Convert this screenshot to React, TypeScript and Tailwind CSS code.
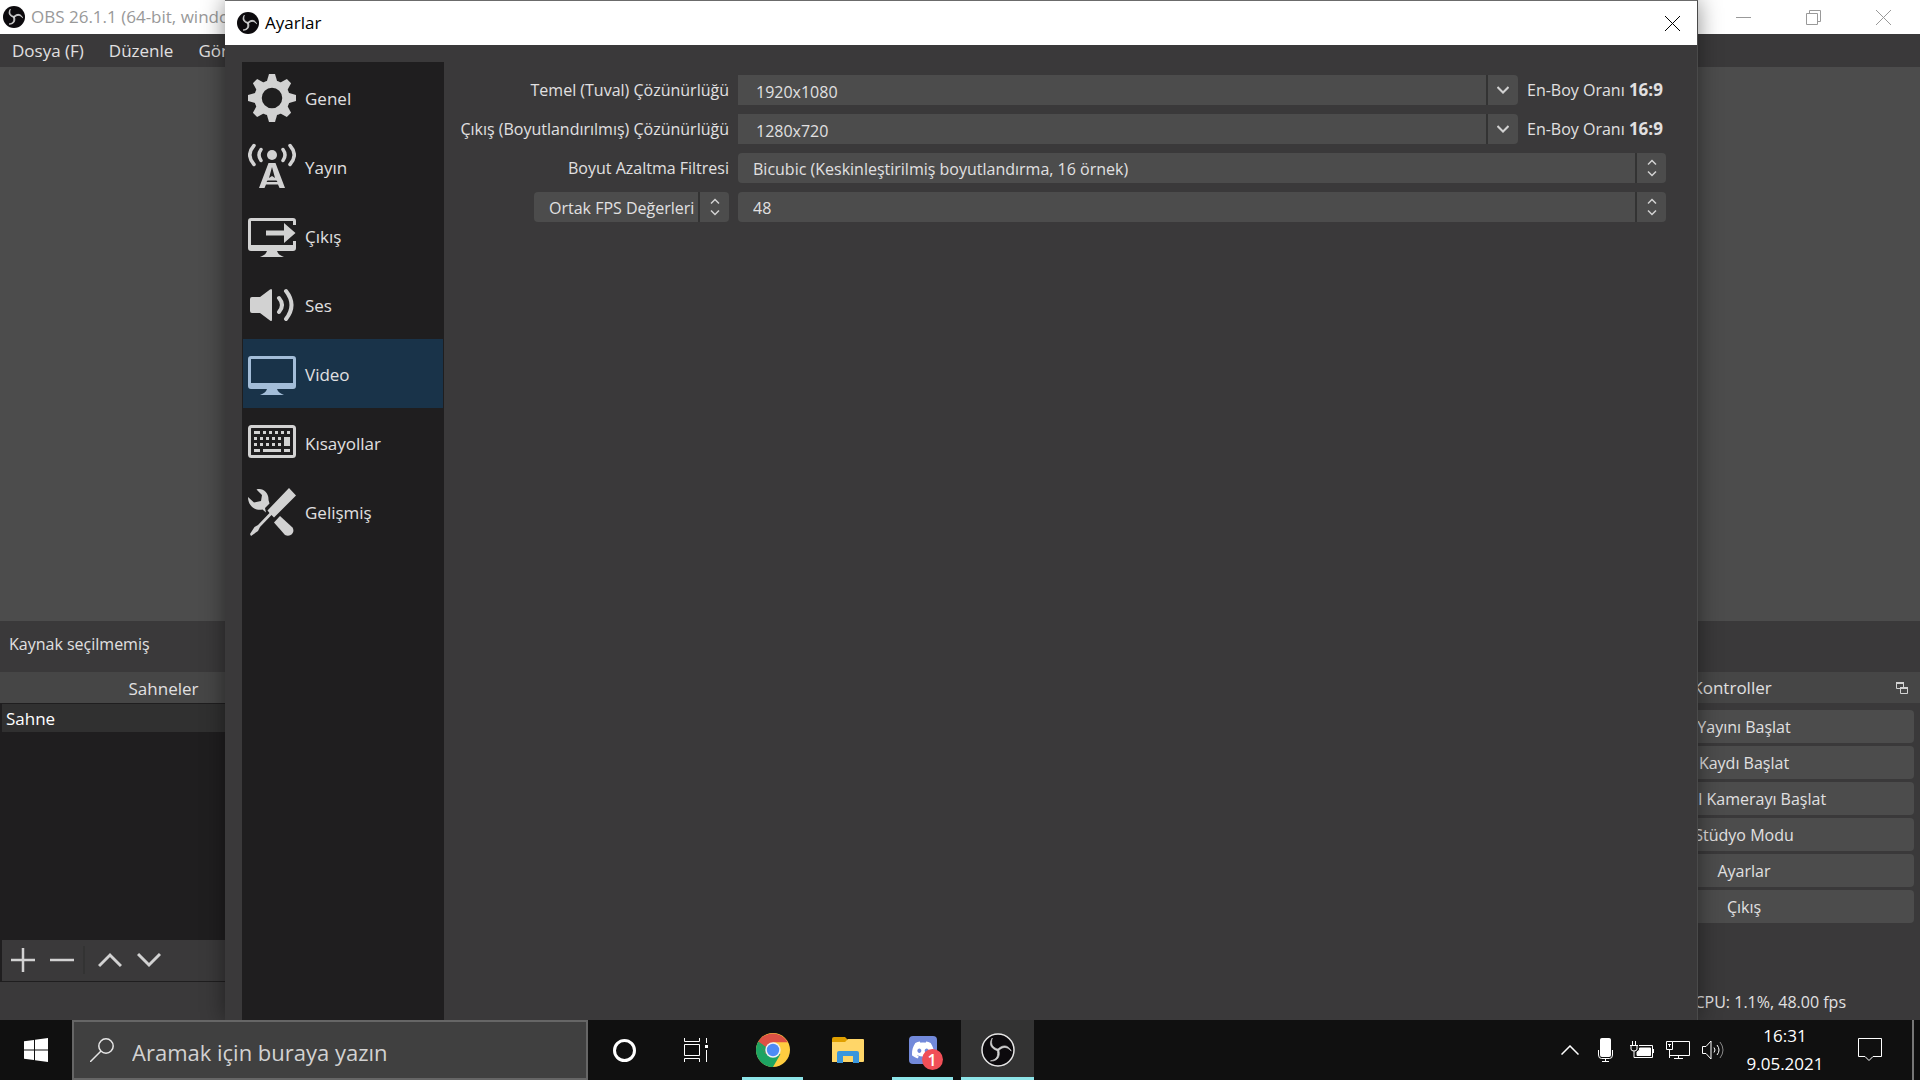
import type { ReactNode } from "react";
import { SiDiscord } from "react-icons/si";

interface SettingsPage {
  id: string;
  label: string;
  icon: ReactNode;
}

const monitorFrame =
  "M3 6h42a3 3 0 0 1 3 3v27a3 3 0 0 1-3 3H29c1 3 3 4.500 7 6H12c4-1.500 6-3 7-6H3a3 3 0 0 1-3-3V9a3 3 0 0 1 3-3ZM3 9v24h42V9Z";

const keyRows = [
  { y: 12, keys: [[6, 6], [15, 3], [21, 3], [27, 3], [33, 3], [39, 3]] },
  { y: 18, keys: [[6, 3], [12, 3], [18, 3], [24, 3], [30, 3]] },
  { y: 24, keys: [[6, 3], [12, 3], [18, 3], [24, 3], [30, 3]] },
  { y: 30, keys: [[6, 6], [15, 18], [36, 6]] },
];

const pages: SettingsPage[] = [
  {
    id: "general",
    label: "Genel",
    icon: (
      <>
        <circle cx="24" cy="24" r="14" fill="none" stroke="currentColor" strokeWidth="7.500" />
        {[0, 45, 90, 135, 180, 225, 270, 315].map((angle) => (
          <path key={angle} d="M21 0h6l2.500 8.500h-11Z" transform={`rotate(${angle} 24 24)`} />
        ))}
      </>
    ),
  },
  {
    id: "stream",
    label: "Yayın",
    icon: (
      <>
        <circle cx="24" cy="12" r="5" />
        <g fill="none" stroke="currentColor" strokeWidth="3.500" strokeLinecap="round">
          <path d="M13 6.500q-4 5.500 0 11M35 6.500q4 5.500 0 11M6 2.500q-8.500 9.500 0 19M42 2.500q8.500 9.500 0 19" />
        </g>
        <path
          fillRule="evenodd"
          d="M20.500 20h7L37 45h-5.500L30 41.500H18L16.500 45H11ZM24 24l-3 11 3-2 3 2ZM19.500 37.500l-1 1.500h11l-1-1.500Z"
        />
      </>
    ),
  },
  {
    id: "output",
    label: "Çıkış",
    icon: (
      <path d="M3 6h42a3 3 0 0 1 3 3v4h-3V9H3v24h42v-4h3v7a3 3 0 0 1-3 3H29c1 3 3 4.500 7 6H12c4-1.500 6-3 7-6H3a3 3 0 0 1-3-3V9a3 3 0 0 1 3-3ZM18 18.500h18V11l11.500 10L36 31v-7.500H18Z" />
    ),
  },
  {
    id: "audio",
    label: "Ses",
    icon: (
      <>
        <path d="M4 16h8L22 8.500q2-1.500 2 1v29q0 2.500-2 1L12 32H4q-2 0-2-2V18q0-2 2-2Z" />
        <g fill="none" stroke="currentColor" strokeWidth="4" strokeLinecap="round">
          <path d="M31 17q6 7 0 14M38 10q11 14 0 28" />
        </g>
      </>
    ),
  },
  {
    id: "video",
    label: "Video",
    icon: <path fillRule="evenodd" d={monitorFrame} />,
  },
  {
    id: "hotkeys",
    label: "Kısayollar",
    icon: (
      <>
        <rect x="1.500" y="7.500" width="45" height="30" rx="2" fill="none" stroke="currentColor" strokeWidth="3" />
        {keyRows.map((row) =>
          row.keys.map(([x, width]) => (
            <rect key={`${row.y}-${x}`} x={x} y={row.y} width={width} height="3" />
          ))
        )}
        <rect x="36" y="18" width="6" height="9" />
      </>
    ),
  },
  {
    id: "advanced",
    label: "Gelişmiş",
    icon: (
      <>
        <path d="M41 0l7 7.500L26 29.500l-2.500-2.500L12 39l-2 4-7 5-1-2 4.500-7 3.500-2L21.500 25 19.500 22.500Z" />
        <path d="M8.500 1.500C15 -.5 21 5 20.500 12l1 3.500-4.500 4.500 1 4.500-3.500-3C7 23 0 18 0 9l6 5.500 7-1.500 1-6Z" />
        <path d="M32 28l12.500 11.500c3 5-2 10-7.500 7.500L26 34.500Z" />
      </>
    ),
  },
];

const controls = [
  "Yayını Başlat",
  "Kaydı Başlat",
  "Sanal Kamerayı Başlat",
  "Stüdyo Modu",
  "Ayarlar",
  "Çıkış",
];

function ObsLogo({ className, ring }: { className: string; ring?: boolean }) {
  return (
    <svg viewBox="-17 -17 34 34" className={`shrink-0 ${className}`}>
      <circle r={ring ? 16 : 17} fill="#0c0a0d" stroke={ring ? "#e6e6e6" : "none"} strokeWidth="1.500" />
      <g fill="#d2d2d2" stroke="#d2d2d2" strokeWidth={ring ? 0.6 : 1.2} strokeLinejoin="round">
        {[0, 120, 240].map((angle) => (
          <path
            key={angle}
            d="M-5.700-12C-10.500-5-5.500-.5 0 .8L.5-.8C-4.500-2-8-5-5.700-12Z"
            transform={`rotate(${angle})`}
          />
        ))}
      </g>
    </svg>
  );
}

function CloseIcon() {
  return (
    <svg viewBox="0 0 15 15" className="size-[15px]" fill="none" stroke="currentColor">
      <path d="M0 0l15 15M15 0L0 15" />
    </svg>
  );
}

function Spinner() {
  return (
    <span className="pointer-events-none absolute inset-y-0 right-0 flex w-[31px] items-center justify-center border-l-2 border-[#333333]">
      <svg viewBox="0 0 10 18" className="h-[18px] w-[10px]" fill="none" stroke="#d2d2d2" strokeWidth="1.500">
        <path d="M1 5.500l4-4 4 4M1 12.500l4 4 4-4" />
      </svg>
    </span>
  );
}

function ComboBox({ id, value }: { id: string; value: string }) {
  return (
    <div className="flex h-[30px] min-w-0 flex-1">
      <input
        id={id}
        defaultValue={value}
        className="min-w-0 flex-1 bg-[#4c4c4c] pt-1 pl-[18px] outline-none"
      />
      <button
        type="button"
        aria-label="Listeyi aç"
        className="flex w-8 items-center justify-center rounded-r border-l-2 border-[#333333] bg-[#4c4c4c]"
      >
        <svg viewBox="0 0 12 8" className="h-2 w-3" fill="none" stroke="#d2d2d2" strokeWidth="2">
          <path d="M0.500 1L6 6.500 11.500 1" />
        </svg>
      </button>
    </div>
  );
}

function SelectBox({ id, value, label }: { id: string; value: string; label?: string }) {
  return (
    <div className="relative h-[30px] w-full">
      <select
        id={id}
        aria-label={label}
        className="size-full appearance-none rounded bg-[#4c4c4c] pt-0.5 pr-8 pl-[15px] outline-none"
      >
        <option>{value}</option>
      </select>
      <Spinner />
    </div>
  );
}

function AspectRatio() {
  return (
    <span className="w-[139px] whitespace-nowrap">
      En-Boy Oranı <b className="text-[17px]">16:9</b>
    </span>
  );
}

function VideoForm() {
  return (
    <form className="grid flex-1 auto-rows-[30px] grid-cols-[285px_1fr] content-start items-center gap-[9px] pt-[13px] pr-[15px] text-base">
      <label htmlFor="base" className="text-right whitespace-nowrap">
        Temel (Tuval) Çözünürlüğü
      </label>
      <div className="flex items-center gap-[9px]">
        <ComboBox id="base" value="1920x1080" />
        <AspectRatio />
      </div>
      <label htmlFor="output" className="text-right whitespace-nowrap">
        Çıkış (Boyutlandırılmış) Çözünürlüğü
      </label>
      <div className="flex items-center gap-[9px]">
        <ComboBox id="output" value="1280x720" />
        <AspectRatio />
      </div>
      <label htmlFor="filter" className="text-right whitespace-nowrap">
        Boyut Azaltma Filtresi
      </label>
      <SelectBox id="filter" value="Bicubic (Keskinleştirilmiş boyutlandırma, 16 örnek)" />
      <div className="w-[195px] justify-self-end">
        <SelectBox id="fps-type" label="FPS türü" value="Ortak FPS Değerleri" />
      </div>
      <SelectBox id="fps" label="FPS" value="48" />
    </form>
  );
}

function SettingsDialog() {
  return (
    <section
      role="dialog"
      aria-label="Ayarlar"
      className="absolute inset-y-0 right-[222px] left-[225px] flex flex-col border-t border-r border-[#6b6b6b] border-r-[#4a4a4a] bg-[#3a393a] shadow-[0_0_22px_rgba(0,0,0,0.45)]"
    >
      <header className="flex h-11 shrink-0 items-center bg-white pr-[17px] pl-3 text-black">
        <ObsLogo className="size-[22px]" />
        <h2 className="ml-[6px] flex-1 text-[17px]">Ayarlar</h2>
        <button type="button" aria-label="Kapat">
          <CloseIcon />
        </button>
      </header>
      <div className="flex min-h-0 flex-1 pt-[17px] pr-4 pl-[17px]">
        <nav className="w-[202px] shrink-0 bg-[#1f1e1f] p-px">
          {pages.map((page) => (
            <button
              key={page.id}
              type="button"
              className={
                page.id === "video"
                  ? "flex h-[69px] w-full items-center gap-[9px] bg-[#193349] pl-[5px] text-[17px]"
                  : "flex h-[69px] w-full items-center gap-[9px] pl-[5px] text-[17px]"
              }
            >
              <svg
                viewBox="0 0 48 48"
                fill="currentColor"
                className={page.id === "video" ? "size-12 text-[#a3bdd8]" : "size-12 text-[#d2d2d2]"}
              >
                {page.icon}
              </svg>
              <span className="pt-0.5">{page.label}</span>
            </button>
          ))}
        </nav>
        <VideoForm />
      </div>
    </section>
  );
}

function ScenesDock() {
  return (
    <section className="flex w-[327px] flex-col">
      <h3 className="flex h-[31px] items-center justify-center bg-[#464646] pt-0.5 text-[17px]">Sahneler</h3>
      <div className="flex h-[279px] flex-col border border-l-2 border-[#1f1e1f] bg-[#1f1e1f]">
        <ul className="flex-1">
          <li className="flex h-7 items-center bg-[#303030] pt-0.5 pl-1 text-[17px] text-white">Sahne</li>
        </ul>
        <div className="flex h-[41px] items-center bg-[#3a393a] pb-0.5 pl-[9px] text-[#d2d2d2]">
          <button type="button" aria-label="Ekle">
            <svg viewBox="0 0 24 24" className="size-6" fill="none" stroke="currentColor" strokeWidth="2.500">
              <path d="M12 0v24M0 12h24" />
            </svg>
          </button>
          <button type="button" aria-label="Kaldır" className="ml-[15px]">
            <svg viewBox="0 0 24 24" className="size-6" fill="none" stroke="currentColor" strokeWidth="2.500">
              <path d="M0 12h24" />
            </svg>
          </button>
          <span className="ml-[9px] h-7 w-0.5 bg-[#333333]" />
          <button type="button" aria-label="Yukarı taşı" className="ml-[13px]">
            <svg viewBox="0 0 24 24" className="size-6" fill="none" stroke="currentColor" strokeWidth="3">
              <path d="M1 18L12 7l11 11" />
            </svg>
          </button>
          <button type="button" aria-label="Aşağı taşı" className="ml-[15px]">
            <svg viewBox="0 0 24 24" className="size-6" fill="none" stroke="currentColor" strokeWidth="3">
              <path d="M1 6l11 11L23 6" />
            </svg>
          </button>
        </div>
      </div>
    </section>
  );
}

function ControlsDock() {
  return (
    <section className="w-[352px]">
      <div className="flex h-[31px] items-center bg-[#464646] pr-3 text-[17px]">
        <h3 className="flex-1 text-center">Kontroller</h3>
        <button type="button" aria-label="Ayır">
          <svg viewBox="0 0 12 12" className="size-3" fill="none" stroke="#d2d2d2">
            <path d="M0 1h8M4 6h8" strokeWidth="2" />
            <path d="M.5 1v5.500H4M7.500 1v4M4.500 6v5.500h7V6" />
          </svg>
        </button>
      </div>
      <div className="flex flex-col gap-[3px] px-[6px] pt-[7px]">
        {controls.map((label) => (
          <button key={label} type="button" className="h-[33px] rounded bg-[#4c4c4c] text-base">
            {label}
          </button>
        ))}
      </div>
    </section>
  );
}

function MainWindow() {
  return (
    <div className="flex h-full flex-col">
      <header className="flex h-[34px] shrink-0 items-center bg-white pr-[29px] pl-[3px] text-[#999999]">
        <ObsLogo className="size-[22px]" />
        <h1 className="ml-[6px] flex-1 text-[17px]">OBS 26.1.1 (64-bit, windows)</h1>
        <div className="flex items-center gap-[55px]">
          <button type="button" aria-label="Simge durumuna küçült" className="h-px w-[15px] bg-[#999999]" />
          <button type="button" aria-label="Önceki boyut">
            <svg viewBox="0 0 15 15" className="size-[15px]" fill="none" stroke="currentColor">
              <path d="M.5 3.500h11v11H.5ZM3.500 3.500v-3h11v11h-3" />
            </svg>
          </button>
          <button type="button" aria-label="Pencereyi kapat">
            <CloseIcon />
          </button>
        </div>
      </header>
      <nav className="flex h-[33px] shrink-0 items-center gap-[25px] pl-3 text-[17px]">
        <button type="button">Dosya (F)</button>
        <button type="button">Düzenle</button>
        <button type="button">Görünüm</button>
      </nav>
      <div className="flex-1 bg-[#4c4c4c]" />
      <p className="flex h-[51px] shrink-0 items-center pb-1.5 pl-[9px] text-base">Kaynak seçilmemiş</p>
      <div className="flex h-[310px] shrink-0 justify-between">
        <ScenesDock />
        <ControlsDock />
      </div>
      <footer className="flex h-[38px] shrink-0 items-center justify-end pt-0.5 pr-[74px] text-base">
        CPU: 1.1%, 48.00 fps
      </footer>
    </div>
  );
}

function ChromeIcon() {
  return (
    <svg viewBox="0 0 34 34" className="size-[34px]">
      <circle cx="17" cy="17" r="17" fill="#ffcd40" />
      <path d="M17 17L2.300 8.500A17 17 0 0 0 17 34l7.400-12.700Z" fill="#1da462" />
      <path d="M2.300 8.500A17 17 0 0 1 31.700 9.300H17L9.600 21.200Z" fill="#dd5144" />
      <path d="M2.300 8.500L9.600 21.200 10 14Z" fill="#1da462" />
      <circle cx="17" cy="17" r="7.700" fill="#f1f1f1" />
      <circle cx="17" cy="17" r="6.200" fill="#4c8bf5" />
    </svg>
  );
}

function FolderIcon() {
  return (
    <svg viewBox="0 0 32 27" className="h-[27px] w-8">
      <path d="M0 2q0-2 2-2h11l3 3-3 3H0Z" fill="#e0a000" />
      <path d="M0 5h13l3-3h15q1 0 1 1v21q0 1-1 1H0Z" fill="#ffd668" />
      <path d="M5 16q0-2 2-2h18q2 0 2 2v10h-6v-7H11v7H5Z" fill="#3a96dd" />
    </svg>
  );
}

function DiscordIcon() {
  return (
    <span className="relative flex h-7 w-7 items-center justify-center rounded-sm bg-[#7289da] text-white">
      <SiDiscord className="size-[22px]" />
      <span className="absolute top-[13px] left-[13px] flex size-[21px] items-center justify-center rounded-full bg-[#f04f57] text-base font-semibold">
        1
      </span>
    </span>
  );
}

function TaskbarApp({ label, running, active, children }: {
  label: string;
  running?: boolean;
  active?: boolean;
  children: ReactNode;
}) {
  return (
    <button
      type="button"
      aria-label={label}
      className={`flex h-full w-[73px] flex-col items-center ${active ? "bg-[#333333]" : ""}`}
    >
      <span className="flex flex-1 items-center pt-[3px]">{children}</span>
      <span
        className={`h-[3px] ${active ? "w-full" : "w-[61px]"} ${running ? "bg-[#8de4e8]" : ""}`}
      />
    </button>
  );
}

function Tray() {
  return (
    <div className="flex h-full items-center text-white">
      <button type="button" aria-label="Gizli simgeleri göster">
        <svg viewBox="0 0 18 10" className="h-[10px] w-[18px]" fill="none" stroke="currentColor" strokeWidth="1.500">
          <path d="M.5 9.500L9 1l8.500 8.500" />
        </svg>
      </button>
      <svg viewBox="0 0 15 24" className="ml-[19px] h-6 w-[15px]" fill="none" stroke="currentColor">
        <rect x="2.500" y=".5" width="10" height="18" rx="1" fill="currentColor" />
        <path d="M.5 12v5q0 3.500 3 3.500h8q3 0 3-3.500v-5M7.500 20v3.500M4 23.500h7" />
      </svg>
      <svg viewBox="0 0 24 18" className="ml-[17px] h-[18px] w-6" fill="none" stroke="currentColor">
        <path d="M2.500 0v4M5.500 0v4M0 4.500h8M1 5v3q0 2 3 2t3-2V5M4 10v6.500h18.500v-12H9M23.500 8v4" />
        <path d="M9.500 7h11v7.500H7V11l2.500-2Z" fill="currentColor" />
      </svg>
      <svg viewBox="0 0 24 18" className="ml-3 h-[18px] w-6" fill="none" stroke="currentColor">
        <path d="M.5.5h6v8h-6ZM2 3.500h3M3.500 3v3M3.500 9v8M6.500.5h17v14H4M8 17.500h9M12.500 15v2" />
      </svg>
      <svg viewBox="0 0 23 20" className="ml-3 h-5 w-[23px]" fill="none" stroke="currentColor">
        <path d="M.5 6.500H4L9 1v18l-5-5.500H.5ZM12 7.500q2 2.500 0 5M15 5q4 5 0 10" />
        <path d="M18 2q6 8 0 16" opacity=".5" />
      </svg>
      <button type="button" className="ml-[15px] w-[90px] text-center text-[17px] leading-7">
        16:31
        <br />
        9.05.2021
      </button>
      <button type="button" aria-label="Bildirimler" className="ml-7">
        <svg viewBox="0 0 24 24" className="size-6" fill="none" stroke="currentColor">
          <path d="M.5.5h23v18H15L11 22.500 7 18.500H.5Z" />
        </svg>
      </button>
      <span className="mr-[6px] ml-[30px] h-full w-0.5 bg-[#777777]" />
    </div>
  );
}

function Taskbar() {
  return (
    <footer className="flex h-[60px] shrink-0 items-center bg-[#101010]">
      <button type="button" aria-label="Başlat" className="flex w-[72px] justify-center">
        <svg viewBox="0 0 24 24" className="size-6" fill="#ffffff">
          <path d="M0 3.300l10-1.400V11.500H0ZM11 1.700L24 0v11.500H11ZM0 12.500h10v9.600L0 20.700ZM11 12.500h13V24l-13-1.700Z" />
        </svg>
      </button>
      <label className="flex h-full w-[516px] items-center border-2 border-[#666666] bg-[#404040] pl-4">
        <svg viewBox="0 0 24 24" className="size-6" fill="none" stroke="#e6e6e6" strokeWidth="1.500">
          <circle cx="16" cy="8" r="7.200" />
          <path d="M11 13L0 24" />
        </svg>
        <input
          aria-label="Ara"
          placeholder="Aramak için buraya yazın"
          className="ml-[18px] min-w-0 flex-1 pt-1 text-[22px] outline-none placeholder:text-[#d2d2d2]"
        />
      </label>
      <button type="button" aria-label="Cortana" className="flex w-[72px] justify-center">
        <span className="size-[23px] rounded-full border-3 border-white" />
      </button>
      <button type="button" aria-label="Görev Görünümü" className="flex w-[72px] justify-center">
        <svg viewBox="0 0 24 24" className="size-6" fill="none" stroke="#ffffff">
          <path d="M.5 0v3.500h15V0M.5 6.500h15v11H.5ZM.5 24v-3.500h15V24M22.500 0v5M22.500 12v12" />
          <path d="M21 8.500h3" strokeWidth="3" />
        </svg>
      </button>
      <div className="ml-1 flex h-full flex-1 gap-[2px]">
        <TaskbarApp label="Google Chrome" running>
          <ChromeIcon />
        </TaskbarApp>
        <TaskbarApp label="Dosya Gezgini">
          <FolderIcon />
        </TaskbarApp>
        <TaskbarApp label="Discord" running>
          <DiscordIcon />
        </TaskbarApp>
        <TaskbarApp label="OBS Studio" running active>
          <ObsLogo className="size-[34px]" ring />
        </TaskbarApp>
      </div>
      <Tray />
    </footer>
  );
}

export default function App() {
  return (
    <div className="flex h-screen flex-col overflow-hidden bg-[#3a393a] font-['Open_Sans','Noto_Sans',sans-serif] text-[#e1e0e1]">
      <main className="relative min-h-0 flex-1 overflow-hidden">
        <MainWindow />
        <SettingsDialog />
      </main>
      <Taskbar />
    </div>
  );
}
